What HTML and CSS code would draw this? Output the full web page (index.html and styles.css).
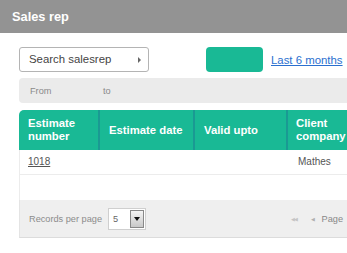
FILE: index.html
```html
<!DOCTYPE html>
<html>
<head>
<meta charset="utf-8">
<link rel="stylesheet" href="styles.css">
</head>
<body>
<div class="header">Sales rep</div>
<div class="content">
  <div class="toolbar">
    <div class="search">Search salesrep<span class="tri"></span></div>
    <div class="btn"></div>
    <a class="link" href="#">Last 6 months</a>
  </div>
  <div class="filter"><span class="from">From</span><span class="to">to</span></div>
  <div class="grid">
    <div class="thead">
      <div class="th c1">Estimate<br>number</div>
      <div class="th c2">Estimate date</div>
      <div class="th c3">Valid upto</div>
      <div class="th c4">Client<br>company</div>
    </div>
    <div class="row">
      <div class="td c1"><a href="#">1018</a></div>
      <div class="td c2"></div>
      <div class="td c3"></div>
      <div class="td c4">Mathes</div>
    </div>
    <div class="row empty"></div>
    <div class="pager">
      <span class="rpp">Records per page</span>
      <div class="select"><span class="val">5</span><span class="dd"><span class="dtri"></span></span></div>
      <span class="nav">
        <span class="first">&#9664;&#9664;</span>
        <span class="prev">&#9664;</span>
        <span class="page">Page</span>
      </span>
    </div>
  </div>
</div>
</body>
</html>
```
FILE: styles.css
```css
html, body { margin: 0; padding: 0; }
body {
  width: 347px;
  height: 253px;
  overflow: hidden;
  background: #fff;
  font-family: "Liberation Sans", Arial, sans-serif;
}
.header {
  height: 33px;
  background: #939393;
  color: #fff;
  font-weight: bold;
  font-size: 12.8px;
  line-height: 34px;
  padding-left: 12px;
}
.content {
  padding-left: 19px;
  width: 480px;
}
.toolbar {
  display: flex;
  align-items: center;
  margin-top: 14px;
  height: 25px;
}
.search {
  box-sizing: border-box;
  width: 130px;
  height: 25px;
  border: 1px solid #b4b4b4;
  border-radius: 3px;
  font-size: 11.4px;
  color: #444;
  line-height: 23px;
  padding-left: 9px;
  display: flex;
  align-items: center;
  justify-content: space-between;
  padding-right: 7px;
}
.tri {
  width: 0; height: 0;
  border-left: 3px solid #666;
  border-top: 3px solid transparent;
  border-bottom: 3px solid transparent;
}
.btn {
  margin-left: 57px;
  width: 57px;
  height: 25px;
  border-radius: 4px;
  background: #19b995;
}
.link {
  margin-left: 8px;
  font-size: 11.4px;
  color: #2a6fcf;
  text-decoration: underline;
}
.filter {
  margin-top: 6px;
  height: 25px;
  background: #ebebeb;
  border-radius: 4px 0 0 4px;
  font-size: 9.2px;
  color: #8a8a8a;
  display: flex;
  align-items: center;
}
.from { margin-left: 11px; width: 73px; }
.grid { margin-top: 7px; }
.thead {
  display: flex;
  height: 40px;
  background: #19b995;
  border-radius: 5px 0 0 0;
  color: #fff;
  font-weight: bold;
  font-size: 11.3px;
  line-height: 13px;
  white-space: nowrap;
}
.th {
  display: flex;
  align-items: center;
  box-sizing: border-box;
  padding-left: 9px;
}
.th + .th { border-left: 2px solid #1a9a93; }
.c1 { width: 79px; }
.c2 { width: 95px; }
.c3 { width: 93px; }
.c4 { width: 120px; padding-left: 8px; }
.row {
  display: flex;
  border-bottom: 1px solid #ececec;
  border-left: 1px solid #ececec;
  box-sizing: border-box;
  height: 25px;
}
.td {
  box-sizing: border-box;
  padding-left: 8px;
  font-size: 10px;
  color: #555;
  line-height: 24px;
}
.td.c2 { width: 96px; padding-left: 0; }
.td.c3 { width: 94px; padding-left: 0; }
.td.c4 { padding-left: 9px; }
.td a { color: #555; text-decoration: underline; }
.row.empty { border-bottom: none; }
.pager {
  height: 38px;
  background: #efefef;
  border-bottom: 1px solid #dcdcdc;
  border-left: 1px solid #e4e4e4;
  display: flex;
  align-items: center;
  font-size: 9.2px;
  color: #8c8c8c;
  box-sizing: border-box;
  width: 328px;
}
.rpp { margin-left: 9px; }
.select {
  margin-left: 6px;
  display: flex;
  width: 38px;
  height: 22px;
  box-sizing: border-box;
  border: 1px solid #cfcfcf;
  background: #fff;
}
.val { flex: 1; line-height: 20px; padding-left: 4px; color: #666; }
.dd {
  width: 14px;
  margin: 1px;
  box-sizing: border-box;
  border: 1px solid #888;
  background: linear-gradient(#f4f4f4, #c8c8c8);
  display: flex;
  align-items: center;
  justify-content: center;
}
.dtri {
  width: 0; height: 0;
  border-top: 4px solid #111;
  border-left: 3px solid transparent;
  border-right: 3px solid transparent;
}
.nav {
  margin-left: auto;
  display: flex;
  align-items: center;
  padding-right: 4px;
}
.first { font-size: 5px; color: #c4c4c4; letter-spacing: -1px; }
.prev { font-size: 5px; color: #b0b0b0; margin-left: 14px; }
.page { margin-left: 7px; color: #888; }
```
